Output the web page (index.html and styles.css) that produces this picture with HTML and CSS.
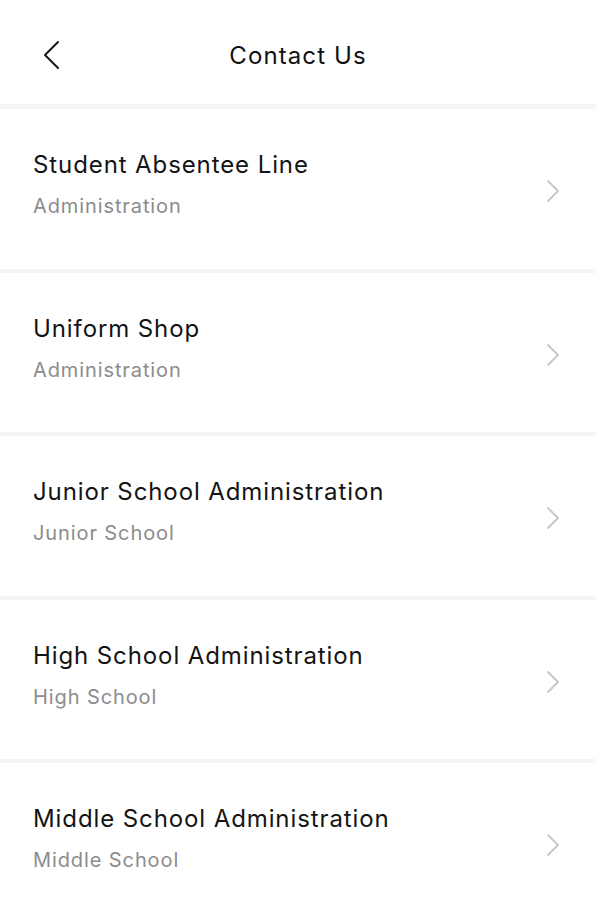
FILE: index.html
```html
<!DOCTYPE html>
<html lang="en">
<head>
    <meta charset="UTF-8">
    <meta name="viewport" content="width=device-width, initial-scale=1.0">
    <title>Contact Us</title>
    <link rel="stylesheet" href="styles.css">
</head>
<body>
    <div class="screen">
        <header class="topbar">
            <button class="back" aria-label="Back">
                <svg width="18" height="30" viewBox="0 0 18 30">
                    <polyline points="16,2 3,15 16,28" fill="none" stroke="#1a1a1a" stroke-width="2" stroke-linecap="round" stroke-linejoin="round"/>
                </svg>
            </button>
            <h1>Contact Us</h1>
        </header>

        <ul class="contacts">
            <li class="contact">
                <div class="info">
                    <div class="name">Student Absentee Line</div>
                    <div class="dept">Administration</div>
                </div>
                <svg class="chev" width="14" height="24" viewBox="0 0 14 24"><polyline points="2,2 12,12 2,22"/></svg>
            </li>
            <li class="contact">
                <div class="info">
                    <div class="name">Uniform Shop</div>
                    <div class="dept">Administration</div>
                </div>
                <svg class="chev" width="14" height="24" viewBox="0 0 14 24"><polyline points="2,2 12,12 2,22"/></svg>
            </li>
            <li class="contact">
                <div class="info">
                    <div class="name">Junior School Administration</div>
                    <div class="dept">Junior School</div>
                </div>
                <svg class="chev" width="14" height="24" viewBox="0 0 14 24"><polyline points="2,2 12,12 2,22"/></svg>
            </li>
            <li class="contact">
                <div class="info">
                    <div class="name">High School Administration</div>
                    <div class="dept">High School</div>
                </div>
                <svg class="chev" width="14" height="24" viewBox="0 0 14 24"><polyline points="2,2 12,12 2,22"/></svg>
            </li>
            <li class="contact">
                <div class="info">
                    <div class="name">Middle School Administration</div>
                    <div class="dept">Middle School</div>
                </div>
                <svg class="chev" width="14" height="24" viewBox="0 0 14 24"><polyline points="2,2 12,12 2,22"/></svg>
            </li>
        </ul>
    </div>
</body>
</html>
```

FILE: styles.css
```css
* {
    margin: 0;
    padding: 0;
    box-sizing: border-box;
    font-family: Inter, 'Noto Sans', sans-serif;
}

body {
    background: #ffffff;
    color: #1a1a1a;
}

.screen {
    width: 596px;
    height: 900px;
    overflow: hidden;
}

.topbar {
    height: 109px;
    padding-top: 41px;
    display: flex;
    justify-content: center;
    border-bottom: 5px solid #f5f5f5;
}

.topbar h1 {
    font-size: 24px;
    line-height: 30px;
    font-weight: 400;
    letter-spacing: 1.1px;
    color: #111111;
}

.back {
    width: 18px;
    height: 30px;
    margin: -1px 0 0 42px;
    border: none;
    background: none;
    display: flex;
    position: absolute;
    left: 0;
}

.contacts {
    list-style: none;
}

.contact {
    height: 163.5px;
    padding: 41px 36px 0 33px;
    display: flex;
    align-items: flex-start;
    justify-content: space-between;
    border-bottom: 4px solid #f5f5f5;
}

.name {
    font-size: 24px;
    line-height: 30px;
    font-weight: 400;
    letter-spacing: 0.9px;
    color: #141414;
}

.dept {
    margin-top: 14px;
    font-size: 20px;
    line-height: 24px;
    letter-spacing: 0.9px;
    color: #8c8c8c;
}

.chev {
    margin-top: 29px;
    fill: none;
    stroke: #c6c6c6;
    stroke-width: 1.8;
    stroke-linecap: round;
    stroke-linejoin: round;
}
```
